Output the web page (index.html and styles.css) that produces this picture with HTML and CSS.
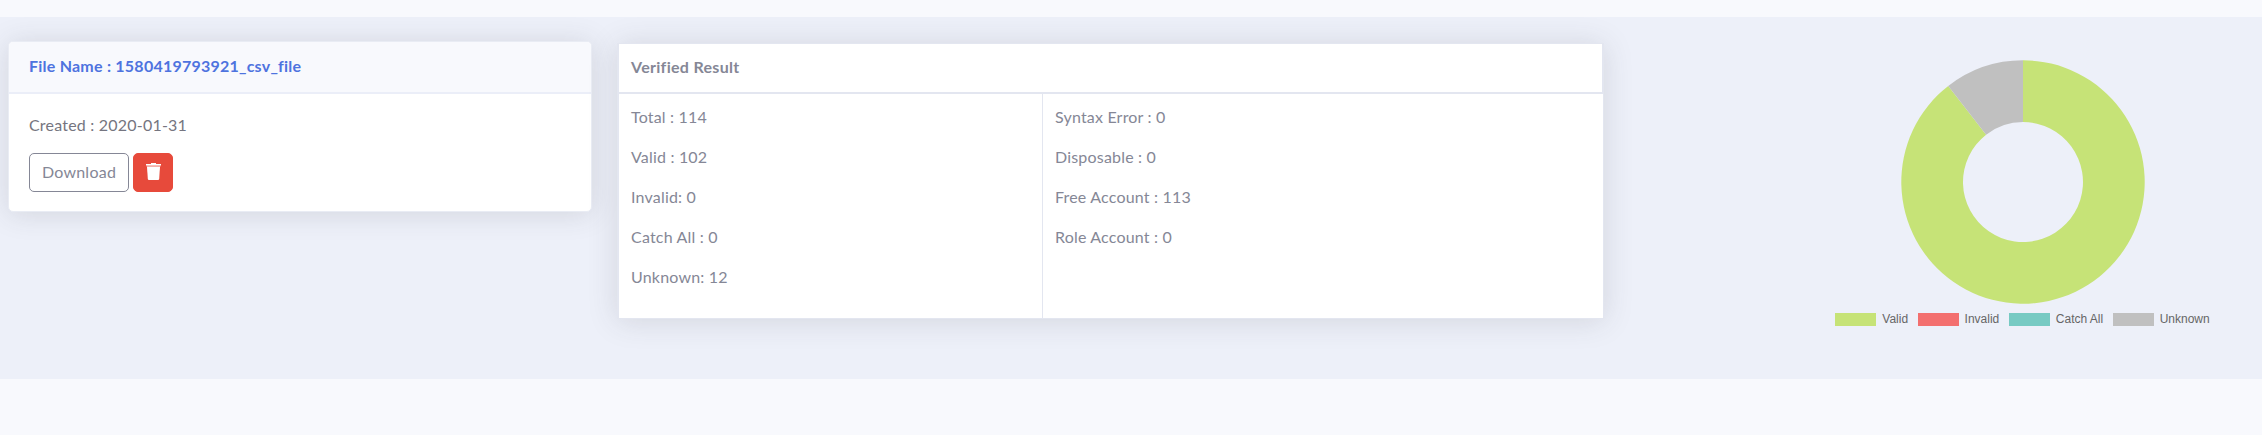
FILE: index.html
```html
<!DOCTYPE html>
<html lang="en">
<head>
<meta charset="utf-8">
<title>Verified Result</title>
<link rel="stylesheet" href="styles.css">
</head>
<body>
<main class="panel">
  <section class="file-card">
    <h2 class="file-title">File Name : 1580419793921_csv_file</h2>
    <div class="file-body">
      <p class="created">Created : 2020-01-31</p>
      <div class="actions">
        <button class="btn btn-outline" type="button">Download</button>
        <button class="btn btn-danger" type="button" aria-label="Delete">
          <svg class="trash" viewBox="0 0 15 17" width="15" height="17">
            <path fill="#fff" d="M5 0h5v1H5z"/>
            <path fill="#fff" d="M0 1h15v1.4H0z"/>
            <path fill="#fff" opacity=".55" d="M0.6 2.4h13.8v1.4H.6z"/>
            <path fill="#fff" d="M1 3.8h13l-.8 12.1q-.1 1.1-1.2 1.1H3q-1.100 0-1.200-1.100z"/>
          </svg>
        </button>
      </div>
    </div>
  </section>

  <section class="result">
    <h2 class="result-title">Verified Result</h2>
    <div class="result-body">
      <ul class="stats">
        <li>Total : 114</li>
        <li>Valid : 102</li>
        <li>Invalid: 0</li>
        <li>Catch All : 0</li>
        <li>Unknown: 12</li>
      </ul>
      <ul class="stats">
        <li>Syntax Error : 0</li>
        <li>Disposable : 0</li>
        <li>Free Account : 113</li>
        <li>Role Account : 0</li>
      </ul>
    </div>
  </section>

  <section class="chart">
    <svg class="donut" viewBox="-122 -122 244 244" width="244" height="244">
      <path fill="#c6e377" d="M0-121.700A121.700 121.700 0 1 1-74.760-96.030L-36.860-47.350A60 60 0 1 0 0-60z"/>
      <path fill="#c0c0c0" d="M-74.760-96.030A121.700 121.700 0 0 1 0-121.700V-60A60 60 0 0 0-36.860-47.350z"/>
    </svg>
    <ul class="legend">
      <li><i class="swatch valid"></i>Valid</li>
      <li><i class="swatch invalid"></i>Invalid</li>
      <li><i class="swatch catch-all"></i>Catch All</li>
      <li><i class="swatch unknown"></i>Unknown</li>
    </ul>
  </section>
</main>
</body>
</html>
```
FILE: styles.css
```css
* { box-sizing: border-box; }
body {
  margin: 0;
  padding-top: 17px;
  min-height: 435px;
  background: #f8f9fd;
  color: #858796;
  font: 16px/24px Lato, sans-serif;
  letter-spacing: .19px;
}
h2, p, ul { margin: 0; padding: 0; list-style: none; }
h2 { font-size: 16px; font-weight: 700; }
.panel {
  display: grid;
  grid-template-columns: 584px 986px 1fr;
  column-gap: 26px;
  align-items: start;
  height: 362px;
  padding: 24px 0 0 8px;
  background: #edf0f9;
}
.file-card, .result { box-shadow: 0 2px 28px rgba(58, 59, 69, .15); }
.file-card {
  height: 171px;
  border: 1px solid #e9ecf4;
  border-radius: 5px;
  background: #fff;
  overflow: hidden;
}
.file-title {
  height: 52px;
  padding: 12px 20px;
  border-bottom: 2px solid #ebeef8;
  background: #f8f9fd;
  color: #4e73df;
  letter-spacing: .23px;
}
.file-body { padding: 19px 20px 0; }
.created { height: 40px; color: #757580; letter-spacing: .21px; }
.actions { display: flex; gap: 4px; }
.btn {
  height: 39px;
  padding: 0 0 2px;
  border: 1px solid #858796;
  border-radius: 5px;
  background: #fff;
  color: #858796;
  font: inherit;
  letter-spacing: .24px;
}
.btn-outline { width: 100px; }
.btn-danger {
  display: flex;
  align-items: flex-start;
  justify-content: center;
  width: 40px;
  padding-top: 9px;
  border-color: #e74a3b;
  background: #e74a3b;
}
.trash { display: block; }
.result {
  height: 276px;
  margin-top: 2px;
  margin-left: -1px;
  background: #fff;
  border: solid #e3e6f0;
  border-width: 1px 1px 1px 2px;
}
.result-title {
  height: 50px;
  padding: 11px 0 0 12px;
  border-right: 1px solid #e3e6f0;
  border-bottom: 2px solid #e3e6f0;
  letter-spacing: .3px;
}
.result-body { display: grid; grid-template-columns: 423px 1fr; height: 224px; }
.stats { padding: 11px 12px 0; }
.stats + .stats { border-left: 1px solid #e3e6f0; }
.stats li { height: 40px; }
.chart { display: flex; flex-direction: column; align-items: center; padding: 19px 44px 0 197px; }
.donut { display: block; }
.legend {
  display: flex;
  gap: 9.500px;
  margin-top: 8px;
  color: #666;
  font: 12px/15px "Liberation Sans", Arial, sans-serif;
  letter-spacing: 0;
  white-space: nowrap;
}
.legend li { display: flex; align-items: center; }
.swatch { width: 41px; height: 13px; margin-right: 6px; }
.valid { background: #c6e377; }
.invalid { background: #f36f6f; }
.catch-all { background: #77cac3; }
.unknown { background: #c0c0c0; }
```
